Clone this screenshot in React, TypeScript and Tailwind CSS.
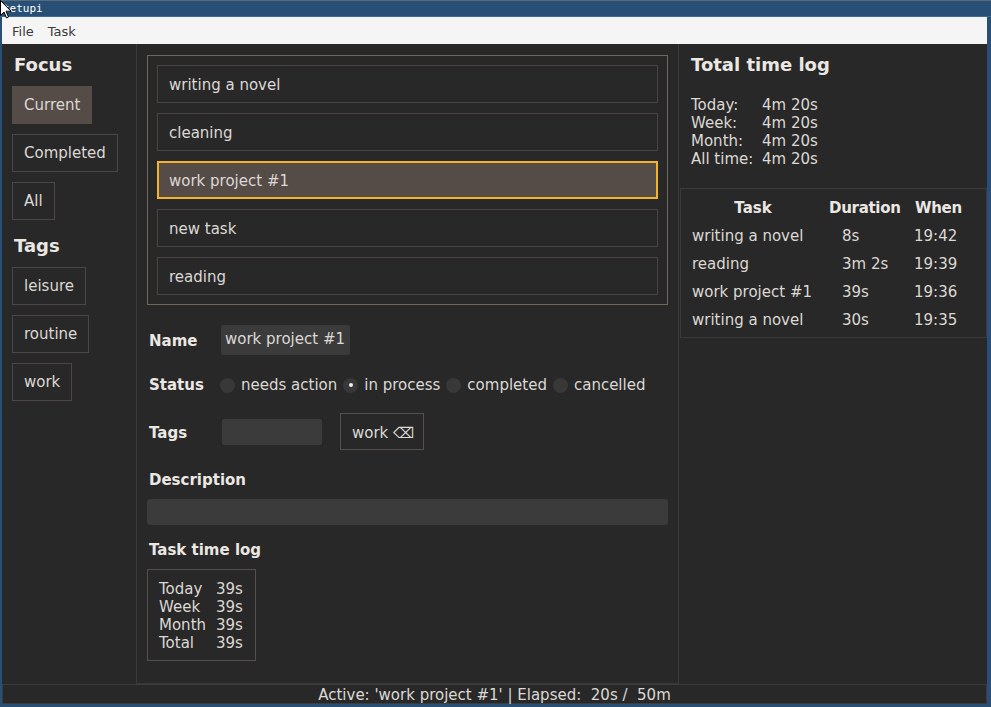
import React from "react";

const tasks = ["writing a novel", "cleaning", "work project #1", "new task", "reading"];
const selectedTask = 2;

function SideButton({ label, active }: { label: string; active?: boolean }) {
  return (
    <div
      className={
        "h-[38px] self-start flex items-center px-[11px] border text-[15px] " +
        (active ? "bg-[#554b47] border-[#554b47]" : "border-[#4c4744]")
      }
    >
      {label}
    </div>
  );
}

function Radio({ checked, label }: { checked?: boolean; label: string }) {
  return (
    <div className="flex items-center gap-[6px]">
      <div className="w-[15px] h-[15px] rounded-full bg-[#383838] flex items-center justify-center">
        {checked && <div className="w-[4px] h-[4px] rounded-full bg-[#eeeeee]" />}
      </div>
      <span>{label}</span>
    </div>
  );
}

export default function App() {
  return (
    <div
      className="w-[991px] h-[707px] bg-[#285077] flex flex-col overflow-hidden relative text-[#dcd8d4]"
      style={{ fontFamily: '"DejaVu Sans", "Liberation Sans", sans-serif' }}
    >
      {/* title bar */}
      <div
        className="h-[17px] border-t border-[#5a6a78] border-b-[1px] border-b-[#3c6a92] flex items-center pl-[3px] text-white text-[11px] leading-none"
        style={{ fontFamily: '"DejaVu Sans Mono", monospace' }}
      >
        tetupi
      </div>
      <div className="flex-1 flex flex-col pl-[2px] pr-[4px] pb-[3px]">
        {/* menu */}
        <div className="h-[27px] bg-[#f5f5f5] flex items-center gap-[14px] pl-[10px] pt-[2px] text-[13px] text-[#3a3a3a]">
          <span>File</span>
          <span>Task</span>
        </div>
        {/* main */}
        <div className="h-[640px] flex bg-[#282828]">
          {/* sidebar */}
          <div className="w-[135px] border-r border-[#3a3a3a] flex flex-col pl-[10px] pt-[9px]">
            <div className="h-[22px] pt-[2px] leading-[20px] text-[18px] font-bold pl-[2px] text-[#ebe7e3]">Focus</div>
            <div className="flex flex-col gap-[10px] mt-[11px]">
              <SideButton label="Current" active />
              <SideButton label="Completed" />
              <SideButton label="All" />
            </div>
            <div className="h-[22px] pt-[2px] leading-[20px] text-[18px] font-bold pl-[2px] mt-[14px] text-[#ebe7e3]">Tags</div>
            <div className="flex flex-col gap-[10px] mt-[11px]">
              <SideButton label="leisure" />
              <SideButton label="routine" />
              <SideButton label="work" />
            </div>
          </div>
          {/* middle */}
          <div className="w-[542px] border-r border-[#3a3a3a] border-b border-b-[#3a3836] flex flex-col px-[10px] pt-[11px] text-[15px]">
            <div className="border border-[#6f665c] p-[9px] flex flex-col gap-[10px]">
              {tasks.map((t, i) =>
                i === selectedTask ? (
                  <div key={t} className="h-[38px] border-2 border-[#f5b428] bg-[#554b47] flex items-center pl-[10px] pt-[2px]">
                    {t}
                  </div>
                ) : (
                  <div key={t} className="h-[38px] border border-[#4a4542] flex items-center pl-[11px] pt-[2px]">
                    {t}
                  </div>
                )
              )}
            </div>
            {/* Name */}
            <div className="flex items-center h-[30px] mt-[20px] pl-[2px]">
              <div className="w-[72px] pt-[2px] font-bold text-[#ebe7e3]">Name</div>
              <div className="h-[30px] w-[129px] bg-[#3b3b3b] rounded-[2px] flex items-start pt-[3px] pl-[4px]">
                work project #1
              </div>
            </div>
            {/* Status */}
            <div className="flex items-center h-[30px] mt-[15px] pl-[2px]">
              <div className="w-[71px] font-bold text-[#ebe7e3]">Status</div>
              <div className="flex items-center gap-[6px]">
                <Radio label="needs action" />
                <Radio label="in process" checked />
                <Radio label="completed" />
                <Radio label="cancelled" />
              </div>
            </div>
            {/* Tags */}
            <div className="flex items-center h-[37px] mt-[13px] pl-[2px]">
              <div className="w-[73px] pt-[4px] font-bold text-[#ebe7e3]">Tags</div>
              <div className="h-[26px] w-[100px] bg-[#3b3b3b] rounded-[2px]" />
              <div className="ml-[18px] h-[37px] border border-[#55504c] flex items-center pl-[11px] pr-[9px] pt-[4px]">
                work ⌫
              </div>
            </div>
            {/* Description */}
            <div className="h-[20px] pt-[2px] leading-[18px] mt-[19px] pl-[2px] font-bold text-[#ebe7e3]">Description</div>
            <div className="h-[26px] mt-[10px] bg-[#3b3b3b] rounded-[3px]" />
            {/* Task time log */}
            <div className="h-[20px] pt-[2px] leading-[18px] mt-[14px] pl-[2px] font-bold text-[#ebe7e3]">Task time log</div>
            <div className="mt-[10px] w-[109px] border border-[#55504c] pt-[10px] pb-[8px] pl-[11px] leading-[18px]">
              {[
                ["Today", "39s"],
                ["Week", "39s"],
                ["Month", "39s"],
                ["Total", "39s"],
              ].map(([k, v]) => (
                <div key={k} className="flex">
                  <span className="w-[57px]">{k}</span>
                  <span>{v}</span>
                </div>
              ))}
            </div>
          </div>
          {/* right */}
          <div className="flex-1 flex flex-col pt-[9px] text-[15px]">
            <div className="h-[22px] pt-[2px] leading-[20px] text-[18px] font-bold pl-[12px] text-[#ebe7e3]">Total time log</div>
            <div className="mt-[21px] pl-[12px] leading-[18px]">
              {[
                ["Today:", "4m 20s"],
                ["Week:", "4m 20s"],
                ["Month:", "4m 20s"],
                ["All time:", "4m 20s"],
              ].map(([k, v]) => (
                <div key={k} className="flex">
                  <span className="w-[71px]">{k}</span>
                  <span>{v}</span>
                </div>
              ))}
            </div>
            <div className="mt-[20px] ml-[1px] border border-[#3c3a38] pb-[4px]">
              <div className="grid grid-cols-[144px_90px_1fr] h-[28px] items-center pt-[2px] mt-[4px] font-bold text-[#ebe7e3]">
                <div className="text-center">Task</div>
                <div className="pl-[4px] tracking-[-0.3px]">Duration</div>
                <div className="tracking-[-0.3px]">When</div>
              </div>
              {[
                ["writing a novel", "8s", "19:42"],
                ["reading", "3m 2s", "19:39"],
                ["work project #1", "39s", "19:36"],
                ["writing a novel", "30s", "19:35"],
              ].map(([t, d, w], i) => (
                <div key={i} className="grid grid-cols-[144px_90px_1fr] h-[28px] items-center pt-[2px]">
                  <div className="pl-[11px]">{t}</div>
                  <div className="pl-[17px]">{d}</div>
                  <div className="-ml-[1px]">{w}</div>
                </div>
              ))}
            </div>
          </div>
        </div>
        {/* status bar */}
        <div className="h-[20px] bg-[#282828] border border-[#3c3c3c] flex items-center justify-center pt-[3px] text-[15px] whitespace-pre">
          {"Active: 'work project #1' | Elapsed:  20s /  50m"}
        </div>
      </div>
      {/* mouse pointer */}
      <svg className="absolute left-0 top-0" width="12" height="19" viewBox="0 0 12 19">
        <path d="M0.5 0.5 L0.5 15.5 L4 12 L6.5 18 L8.5 17 L6 11.2 L11 11.2 Z" fill="#ffffff" stroke="#000000" strokeWidth="1" />
      </svg>
    </div>
  );
}
